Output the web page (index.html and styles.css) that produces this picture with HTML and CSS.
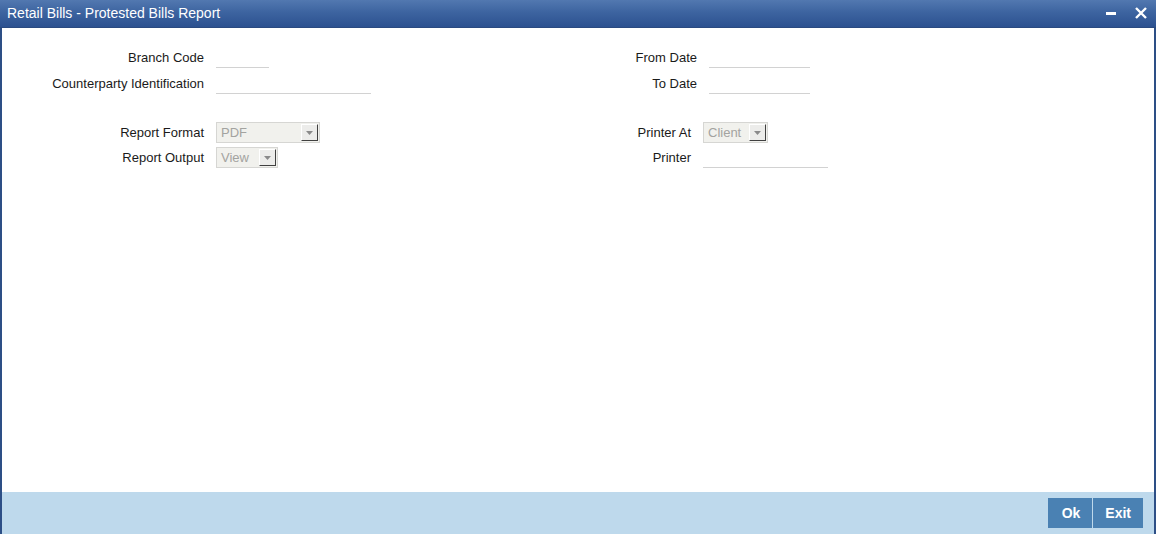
FILE: index.html
```html
<!DOCTYPE html>
<html lang="en">
<head>
<meta charset="utf-8">
<title>Retail Bills - Protested Bills Report</title>
<link rel="stylesheet" href="styles.css">
</head>
<body>
<div class="window">
  <header class="titlebar">
    <span class="title">Retail Bills - Protested Bills Report</span>
    <div class="win-controls">
      <svg class="ctl" width="14" height="14" viewBox="0 0 14 14"><rect x="2" y="6" width="10" height="3" fill="#fff"/></svg>
      <svg class="ctl" width="14" height="14" viewBox="0 0 14 14"><path d="M2 2 L12 12 M12 2 L2 12" stroke="#fff" stroke-width="2.4" fill="none"/></svg>
    </div>
  </header>
  <div class="frame">
    <main class="content">
      <section class="block block-a">
        <label class="lbl">Branch Code</label>
        <div class="cell"><span class="input w53"></span></div>
        <label class="lbl">From Date</label>
        <div class="cell"><span class="input w101"></span></div>

        <label class="lbl">Counterparty Identification</label>
        <div class="cell"><span class="input w155"></span></div>
        <label class="lbl">To Date</label>
        <div class="cell"><span class="input w101"></span></div>
      </section>
      <section class="block block-b">
        <label class="lbl">Report Format</label>
        <div class="cell"><span class="select w104"><span class="sel-text">PDF</span><span class="sel-btn"><svg width="7" height="4" viewBox="0 0 7 4"><path d="M0 0 H7 L3.5 4 Z" fill="#8a8a8a"/></svg></span></span></div>
        <label class="lbl">Printer At</label>
        <div class="cell"><span class="select w65"><span class="sel-text">Client</span><span class="sel-btn"><svg width="7" height="4" viewBox="0 0 7 4"><path d="M0 0 H7 L3.5 4 Z" fill="#8a8a8a"/></svg></span></span></div>

        <label class="lbl">Report Output</label>
        <div class="cell"><span class="select w62"><span class="sel-text">View</span><span class="sel-btn"><svg width="7" height="4" viewBox="0 0 7 4"><path d="M0 0 H7 L3.5 4 Z" fill="#8a8a8a"/></svg></span></span></div>
        <label class="lbl">Printer</label>
        <div class="cell"><span class="input w125"></span></div>
      </section>
    </main>
    <footer class="footer">
      <button class="btn btn-ok">Ok</button>
      <button class="btn">Exit</button>
    </footer>
  </div>
</div>
</body>
</html>
```
FILE: styles.css
```css
html, body {
  margin: 0;
  padding: 0;
  background: #fff;
}
body {
  font-family: Arial, "Liberation Sans", sans-serif;
  font-size: 13px;
  color: #1a1a1a;
}
.window {
  width: 1156px;
  height: 541px;
  display: flex;
  flex-direction: column;
  background: #fff;
}
.titlebar {
  height: 28px;
  flex: none;
  box-sizing: border-box;
  background: linear-gradient(to bottom, #5278b0 0%, #3d64a0 45%, #2c5190 100%);
  border-bottom: 1px solid #2a4a80;
  display: flex;
  align-items: center;
  justify-content: space-between;
  padding: 0 8px 2px 7px;
}
.title {
  color: #fff;
  font-size: 14px;
}
.win-controls {
  display: flex;
  gap: 16px;
  align-items: center;
}
.ctl { display: block; }
.frame {
  height: 506px;
  flex: none;
  display: flex;
  flex-direction: column;
  border-left: 2px solid #2d4f86;
  border-right: 2px solid #2d4f86;
}
.content {
  flex: 1;
  padding-top: 19px;
}
.block {
  display: grid;
  align-items: center;
  column-gap: 12px;
}
.block-a {
  grid-template-columns: 202px 331px 138px 1fr;
  grid-auto-rows: 21px;
  row-gap: 5px;
}
.block-b {
  margin-top: 28px;
  grid-template-columns: 202px 331px 132px 1fr;
  grid-auto-rows: 21px;
  row-gap: 4px;
}
.lbl {
  text-align: right;
  line-height: 21px;
  white-space: nowrap;
}
.cell {
  height: 21px;
  display: flex;
  align-items: stretch;
}
.input {
  display: block;
  box-sizing: border-box;
  height: 21px;
  border-bottom: 1px solid #d2d2d2;
}
.w53 { width: 53px; }
.w101 { width: 101px; }
.w155 { width: 155px; }
.w125 { width: 125px; }
.w104 { width: 104px; }
.w65 { width: 65px; }
.w62 { width: 62px; }
.select {
  box-sizing: border-box;
  height: 21px;
  border: 1px solid #d6d6d3;
  background: #f1f1ed;
  display: flex;
  align-items: center;
  justify-content: space-between;
  padding: 0 1px 0 4px;
}
.sel-text {
  color: #a3a3a0;
  font-size: 13px;
}
.sel-btn {
  box-sizing: border-box;
  width: 17px;
  height: 17px;
  background: #ececea;
  border-top: 1px solid #fff;
  border-left: 1px solid #fff;
  border-right: 1px solid #404040;
  border-bottom: 1px solid #404040;
  display: flex;
  align-items: center;
  justify-content: center;
}
.sel-btn svg { display: block; }
.footer {
  height: 42px;
  flex: none;
  background: #bed9ec;
  display: flex;
  justify-content: flex-end;
  align-items: center;
  gap: 1px;
  padding-right: 11px;
}
.btn {
  height: 30px;
  border: none;
  margin: 0;
  background: #4a81b3;
  color: #fff;
  font-family: Arial, "Liberation Sans", sans-serif;
  font-size: 14px;
  font-weight: bold;
  padding: 0 12px;
}
.btn-ok { padding: 0 12px 0 14px; }
```
